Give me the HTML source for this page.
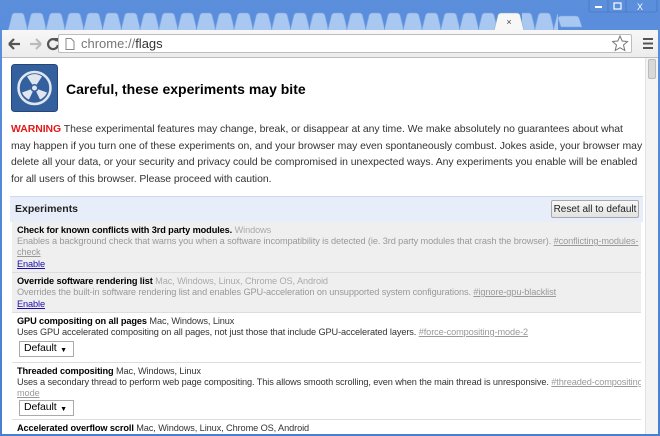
<!DOCTYPE html>
<html><head><style>
*{margin:0;padding:0;box-sizing:border-box}
body{width:660px;height:436px;overflow:hidden;background:#4f82d6;font-family:"Liberation Sans",sans-serif;position:relative}
.frame{position:absolute;left:0;top:0;width:660px;height:436px;background:linear-gradient(#5b8fdc,#4a7ed2)}
.toolbar{position:absolute;left:2px;top:30px;width:656px;height:28px;background:linear-gradient(#f7f7f7,#ececec);border-bottom:1px solid #bcbcbc}
.addr{position:absolute;left:58px;top:34px;width:574px;height:19px;background:#fff;border:1px solid #bdbdbd;border-radius:2px;font-size:13px;color:#777;padding:1px 0 0 22px}
.content{position:absolute;left:2px;top:58px;width:656px;height:376px;background:#fff;overflow:hidden}
.sb{position:absolute;right:0;top:0;width:13px;height:376px;background:#f4f4f4;border-left:1px solid #e2e2e2}
.thumb{position:absolute;left:2px;top:1px;width:8px;height:20px;background:#d8d8d8;border:1px solid #bbb;border-radius:2px}
h1{position:absolute;left:64px;top:23px;font-size:14px;font-weight:bold;color:#000}
.warn{position:absolute;left:9px;top:64px;width:640px;font-size:10.45px;line-height:16.6px;color:#333;white-space:nowrap;letter-spacing:-0.05px}
.warn b{color:#e01b1b}
.exp{position:absolute;left:8px;top:138px;width:633px}
.hdr{height:26px;background:#e8eef9;border-top:1px solid #cdd8ee;font-size:10.5px;font-weight:bold;padding:6px 0 0 5px;position:relative;color:#222}
.reset{position:absolute;right:4px;top:3px;width:88px;height:18px;border:1px solid #a8a8a8;border-radius:2px;background:linear-gradient(#f8f8f8,#e2e2e2);font-size:10px;font-weight:normal;text-align:center;padding-top:3px;white-space:nowrap}
.it{font-size:9.2px;line-height:11px;padding:3px 5px 2px;border-bottom:1px solid #ddd;color:#333;margin:0 2px;white-space:nowrap;letter-spacing:-0.1px;overflow:hidden}
.g{background:#efefef;color:#aaa}
.it .t{font-weight:bold;color:#000}
.g .p{color:#999}
.it u{color:#999}
.it a{color:#1a0dab;text-decoration:underline;display:inline-block;margin-top:1px}
.sel{display:inline-block;width:55px;height:16px;border:1px solid #aaa;font-size:10.5px;padding:1px 0 0 4px;margin:3px 0 0 2px;background:#fff;color:#000;position:relative}
.sel:after{content:"▼";position:absolute;right:6px;top:3px;font-size:7px}
</style></head><body>
<div class="frame"></div>
<svg style="position:absolute;left:0;top:0" width="660" height="32">
<defs><pattern id="tp" x="8" y="0" width="18.8" height="32" patternUnits="userSpaceOnUse">
<path d="M0 31 L4 15 Q5 13 7 13 L13 13 Q15 13 16 15 L20 31Z" fill="#a8c7f1" stroke="#7da4df" stroke-width="0.6"/></pattern></defs>
<rect x="8" y="0" width="488" height="32" fill="url(#tp)"/>
<rect x="522" y="0" width="36" height="32" fill="url(#tp)"/>
<path d="M558 18 Q559 16 561 16 L576 16 Q578 16 579 18 L582 27 L561 27Z" fill="#a8c7f1" stroke="#7da4df" stroke-width="0.6"/>
<path d="M494 31 L498 15 Q499 13 501 13 L517 13 Q519 13 520 15 L524 31Z" fill="#f7f7f7" stroke="#8aa" stroke-width="0.5"/>
<text x="509" y="25" font-size="9" text-anchor="middle" fill="#444" font-family="Liberation Sans">×</text>
<rect x="589" y="-1" width="68" height="13" rx="2" fill="#5b8fdc" stroke="#3e6cb8" stroke-width="0.6"/>
<line x1="608" y1="0" x2="608" y2="12" stroke="#3e6cb8" stroke-width="0.6"/>
<line x1="626" y1="0" x2="626" y2="12" stroke="#3e6cb8" stroke-width="0.6"/>
<rect x="595" y="6" width="7" height="2" fill="#fff"/>
<rect x="614" y="3" width="7" height="6" fill="none" stroke="#fff" stroke-width="1.2"/>
<text x="637" y="10" font-size="9" fill="#fff" font-family="Liberation Sans">X</text>
</svg>
<div class="toolbar"></div>
<svg style="position:absolute;left:0;top:30px" width="70" height="28">
<path d="M9 14 H20 M9 14 L14 9 M9 14 L14 19" stroke="#555" stroke-width="2.2" fill="none"/>
<path d="M30 14 H41 M41 14 L36 9 M41 14 L36 19" stroke="#bbb" stroke-width="2.2" fill="none"/>
<path d="M57 11 A5 5 0 1 0 58 15" stroke="#555" stroke-width="2.2" fill="none"/>
<path d="M54 8 L59 8 L59 13Z" fill="#555"/>
</svg>
<div class="addr">chrome://<span style="color:#333">flags</span>
<svg style="position:absolute;left:6px;top:3px" width="10" height="12"><path d="M1 0.5 H6 L9 3.5 V11.5 H1Z" fill="#fff" stroke="#888"/></svg></div>
<svg style="position:absolute;left:612px;top:34px" width="46" height="20">
<path d="M8 2 L10.2 7 L15.5 7.5 L11.5 11 L12.8 16.5 L8 13.7 L3.2 16.5 L4.5 11 L0.5 7.5 L5.8 7Z" fill="none" stroke="#777"/>
<rect x="31" y="4" width="10" height="2" fill="#555"/><rect x="31" y="8.5" width="10" height="2" fill="#555"/><rect x="31" y="13" width="10" height="2" fill="#555"/>
</svg>
<div class="content">
<svg style="position:absolute;left:9px;top:6px" width="48" height="49">
<rect x="0.5" y="0.5" width="46" height="47" rx="3" fill="#35609e" stroke="#25467a"/>
<circle cx="23.5" cy="24" r="16" fill="none" stroke="#dfe6f0" stroke-width="2.5"/>
<g transform="translate(4,0.5)"><path d="M19.5 23.5 L12 12 A13 13 0 0 1 27 12Z M19.5 23.5 L32 28 A13 13 0 0 1 25 35Z M19.5 23.5 L14 35 A13 13 0 0 1 7 28Z" fill="#dfe6f0"/>
<circle cx="19.5" cy="23.5" r="4" fill="#35609e"/><circle cx="19.5" cy="23.5" r="2.5" fill="#dfe6f0"/></g>
</svg>
<h1>Careful, these experiments may bite</h1>
<div class="warn"><b>WARNING</b> These experimental features may change, break, or disappear at any time. We make absolutely no guarantees about what<br>may happen if you turn one of these experiments on, and your browser may even spontaneously combust. Jokes aside, your browser may<br>delete all your data, or your security and privacy could be compromised in unexpected ways. Any experiments you enable will be enabled<br>for all users of this browser. Please proceed with caution.</div>
<div class="exp">
<div class="hdr">Experiments<div class="reset">Reset all to default</div></div>
<div class="it g"><span class="t">Check for known conflicts with 3rd party modules.</span> Windows<br><span class="p">Enables a background check that warns you when a software incompatibility is detected (ie. 3rd party modules that crash the browser). <u>#conflicting-modules-</u><br><u>check</u></span><br><a>Enable</a></div>
<div class="it g"><span class="t">Override software rendering list</span> Mac, Windows, Linux, Chrome OS, Android<br><span class="p">Overrides the built-in software rendering list and enables GPU-acceleration on unsupported system configurations. <u>#ignore-gpu-blacklist</u></span><br><a>Enable</a></div>
<div class="it"><span class="t">GPU compositing on all pages</span> Mac, Windows, Linux<br>Uses GPU accelerated compositing on all pages, not just those that include GPU-accelerated layers. <u>#force-compositing-mode-2</u><br><span class="sel">Default</span><div style="height:3px"></div></div>
<div class="it"><span class="t">Threaded compositing</span> Mac, Windows, Linux<br>Uses a secondary thread to perform web page compositing. This allows smooth scrolling, even when the main thread is unresponsive. <u>#threaded-compositing-</u><br><u>mode</u><br><span class="sel" style="margin-top:1px">Default</span><div style="height:1px"></div></div>
<div class="it" style="border:0"><span class="t">Accelerated overflow scroll</span> Mac, Windows, Linux, Chrome OS, Android<br>When possible, puts the scrolling contents of an overflow scrolling element onto a composited layer for faster scrolling. <u>#force-accelerated-composited-scrolling</u></div>
</div>
<div class="sb"><div class="thumb"></div></div>
</div>
</body></html>
